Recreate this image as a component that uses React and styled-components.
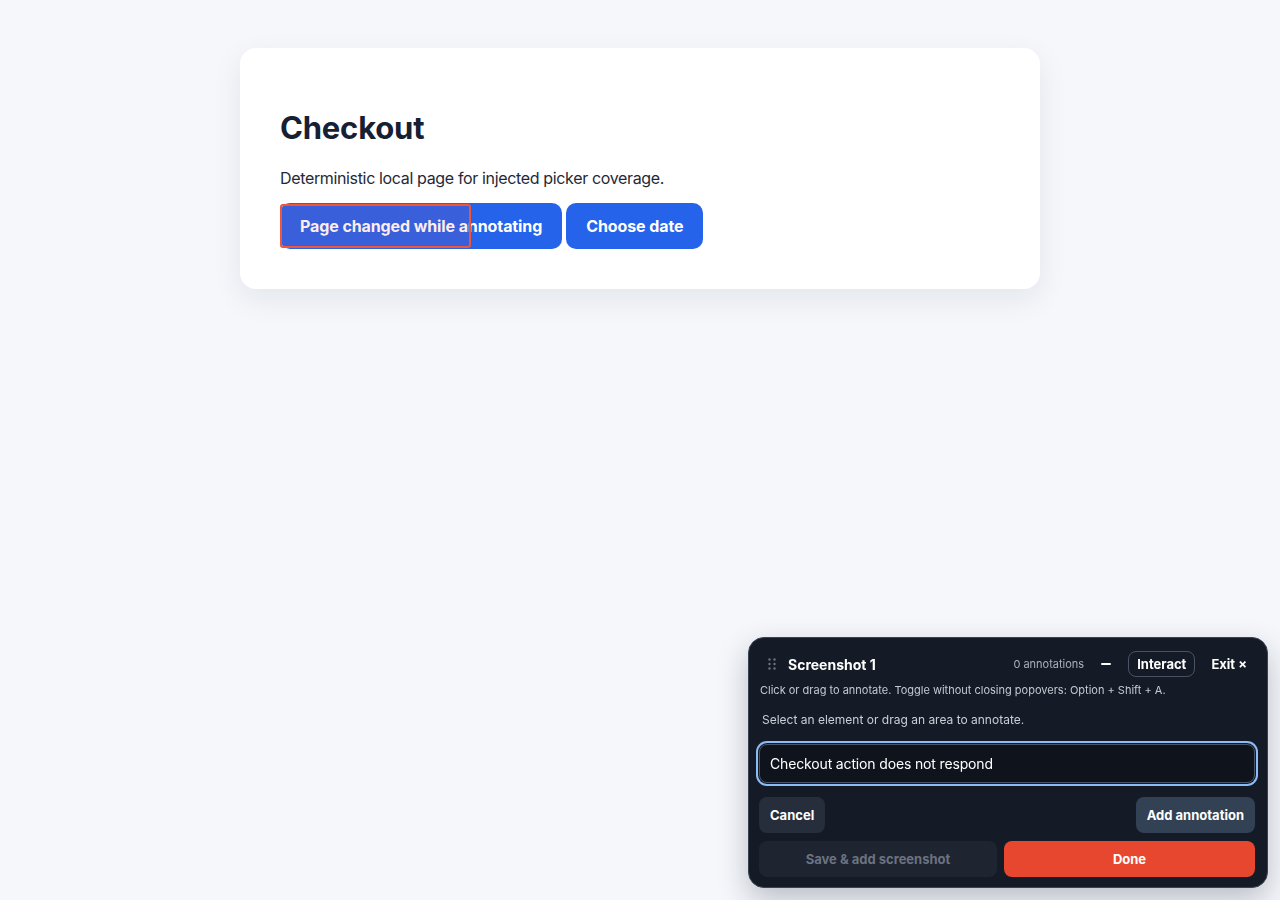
import React from 'react'
import styled, { createGlobalStyle } from 'styled-components'

const GlobalStyle = createGlobalStyle`
  html, body {
    margin: 0;
    padding: 0;
    background: #f5f7fb;
    font-family: Inter, "Noto Sans", "Liberation Sans", sans-serif;
    color: #111827;
  }
  * {
    box-sizing: border-box;
  }
`

const Page = styled.div`
  min-height: 900px;
  padding: 48px 240px 0;
`

const Card = styled.section`
  background: #ffffff;
  border-radius: 16px;
  box-shadow: 0 10px 30px rgba(15, 23, 42, 0.08);
  padding: 40px;
`

const Title = styled.h1`
  font-size: 31px;
  font-weight: 700;
  line-height: 36px;
  margin: 22px 0 21px;
  color: #172033;
  letter-spacing: -0.2px;
`

const Lead = styled.p`
  font-size: 16px;
  line-height: 22px;
  margin: 0 0 14px;
  color: #1f2937;
  letter-spacing: -0.35px;
`

const Actions = styled.div`
  display: flex;
  gap: 4px;
`

const Primary = styled.button`
  position: relative;
  font-family: inherit;
  font-size: 16px;
  font-weight: 700;
  line-height: 22px;
  letter-spacing: -0.1px;
  color: #ffffff;
  background: #2563eb;
  border: none;
  border-radius: 10px;
  padding: 12px 20px;
  cursor: pointer;
`

const Highlight = styled.span`
  position: absolute;
  left: 0;
  top: 1px;
  width: 191px;
  height: 44px;
  border: 2px solid #f0553a;
  border-radius: 3px;
  background: rgba(239, 68, 68, 0.1);
  pointer-events: none;
`

const Panel = styled.aside`
  position: fixed;
  right: 12px;
  bottom: 12px;
  width: 520px;
  background: #151b26;
  border: 1px solid #3a4352;
  border-radius: 16px;
  padding: 13px 12px 10px 10px;
  color: #ffffff;
  box-shadow: 0 12px 30px rgba(15, 23, 42, 0.25);
  display: flex;
  flex-direction: column;
`

const Header = styled.div`
  display: flex;
  align-items: center;
  height: 26px;
  padding-left: 9px;
`

const Grip = styled.svg`
  width: 8px;
  height: 12px;
  margin-right: 12px;
`

const PanelTitle = styled.span`
  font-size: 14px;
  font-weight: 700;
  flex: 1;
`

const Count = styled.span`
  font-size: 11px;
  color: #aab1bd;
  margin-right: 17px;
`

const Minimize = styled.span`
  width: 10px;
  height: 2px;
  background: #ffffff;
  border-radius: 1px;
  margin-right: 17px;
`

const Ghost = styled.button`
  font-family: inherit;
  font-size: 13px;
  font-weight: 700;
  color: #ffffff;
  background: transparent;
  border: 1px solid #4a5365;
  border-radius: 8px;
  height: 26px;
  padding: 0 8px;
  margin-right: 16px;
`

const Exit = styled.span`
  font-size: 13px;
  font-weight: 700;
  margin-right: 8px;
`

const Hint = styled.div`
  font-size: 11px;
  line-height: 14px;
  color: #c3c9d3;
  margin-top: 6px;
  padding-left: 1px;
`

const Status = styled.div`
  font-size: 12px;
  line-height: 16px;
  color: #c9ced7;
  margin-top: 15px;
  padding-left: 3px;
`

const Field = styled.input`
  margin-top: 16px;
  height: 39px;
  width: 100%;
  font-family: inherit;
  font-size: 14px;
  letter-spacing: -0.15px;
  color: #ffffff;
  background: #0f131b;
  border: 1px solid #4b5466;
  border-radius: 8px;
  padding: 0 10px;
  outline: none;
  box-shadow: 0 0 0 1px #151b26, 0 0 0 3px #8cbcf5;
`

const Row = styled.div`
  display: flex;
  justify-content: space-between;
  gap: 7px;
  margin-top: ${p => p.$top}px;
`

const PanelButton = styled.button`
  font-family: inherit;
  font-size: 13px;
  font-weight: 700;
  height: 36px;
  border: none;
  border-radius: 8px;
  padding: 0 11px;
  color: ${p => p.$fg || '#ffffff'};
  background: ${p => p.$bg};
  flex: ${p => p.$grow || '0 0 auto'};
`

const GripIcon = () => (
  <Grip viewBox="0 0 8 12">
    {[1.5, 6.5].map(x =>
      [1.5, 6, 10.5].map(y => <circle key={`${x}-${y}`} cx={x} cy={y} r="1.2" fill="#6b7280" />)
    )}
  </Grip>
)

export default function App() {
  return (
    <>
      <GlobalStyle />
      <Page>
        <Card>
          <Title>Checkout</Title>
          <Lead>Deterministic local page for injected picker coverage.</Lead>
          <Actions>
            <Primary>
              Page changed while annotating
              <Highlight />
            </Primary>
            <Primary>Choose date</Primary>
          </Actions>
        </Card>
      </Page>

      <Panel>
        <Header>
          <GripIcon />
          <PanelTitle>Screenshot 1</PanelTitle>
          <Count>0 annotations</Count>
          <Minimize />
          <Ghost>Interact</Ghost>
          <Exit>Exit ×</Exit>
        </Header>
        <Hint>Click or drag to annotate. Toggle without closing popovers: Option + Shift + A.</Hint>
        <Status>Select an element or drag an area to annotate.</Status>
        <Field defaultValue="Checkout action does not respond" />
        <Row $top={14}>
          <PanelButton $bg="#262e3b">Cancel</PanelButton>
          <PanelButton $bg="#334155">Add annotation</PanelButton>
        </Row>
        <Row $top={8}>
          <PanelButton $bg="#1e2430" $fg="#6b7280" $grow="0 0 238px">Save &amp; add screenshot</PanelButton>
          <PanelButton $bg="#e8472f" $grow="1">Done</PanelButton>
        </Row>
      </Panel>
    </>
  )
}
